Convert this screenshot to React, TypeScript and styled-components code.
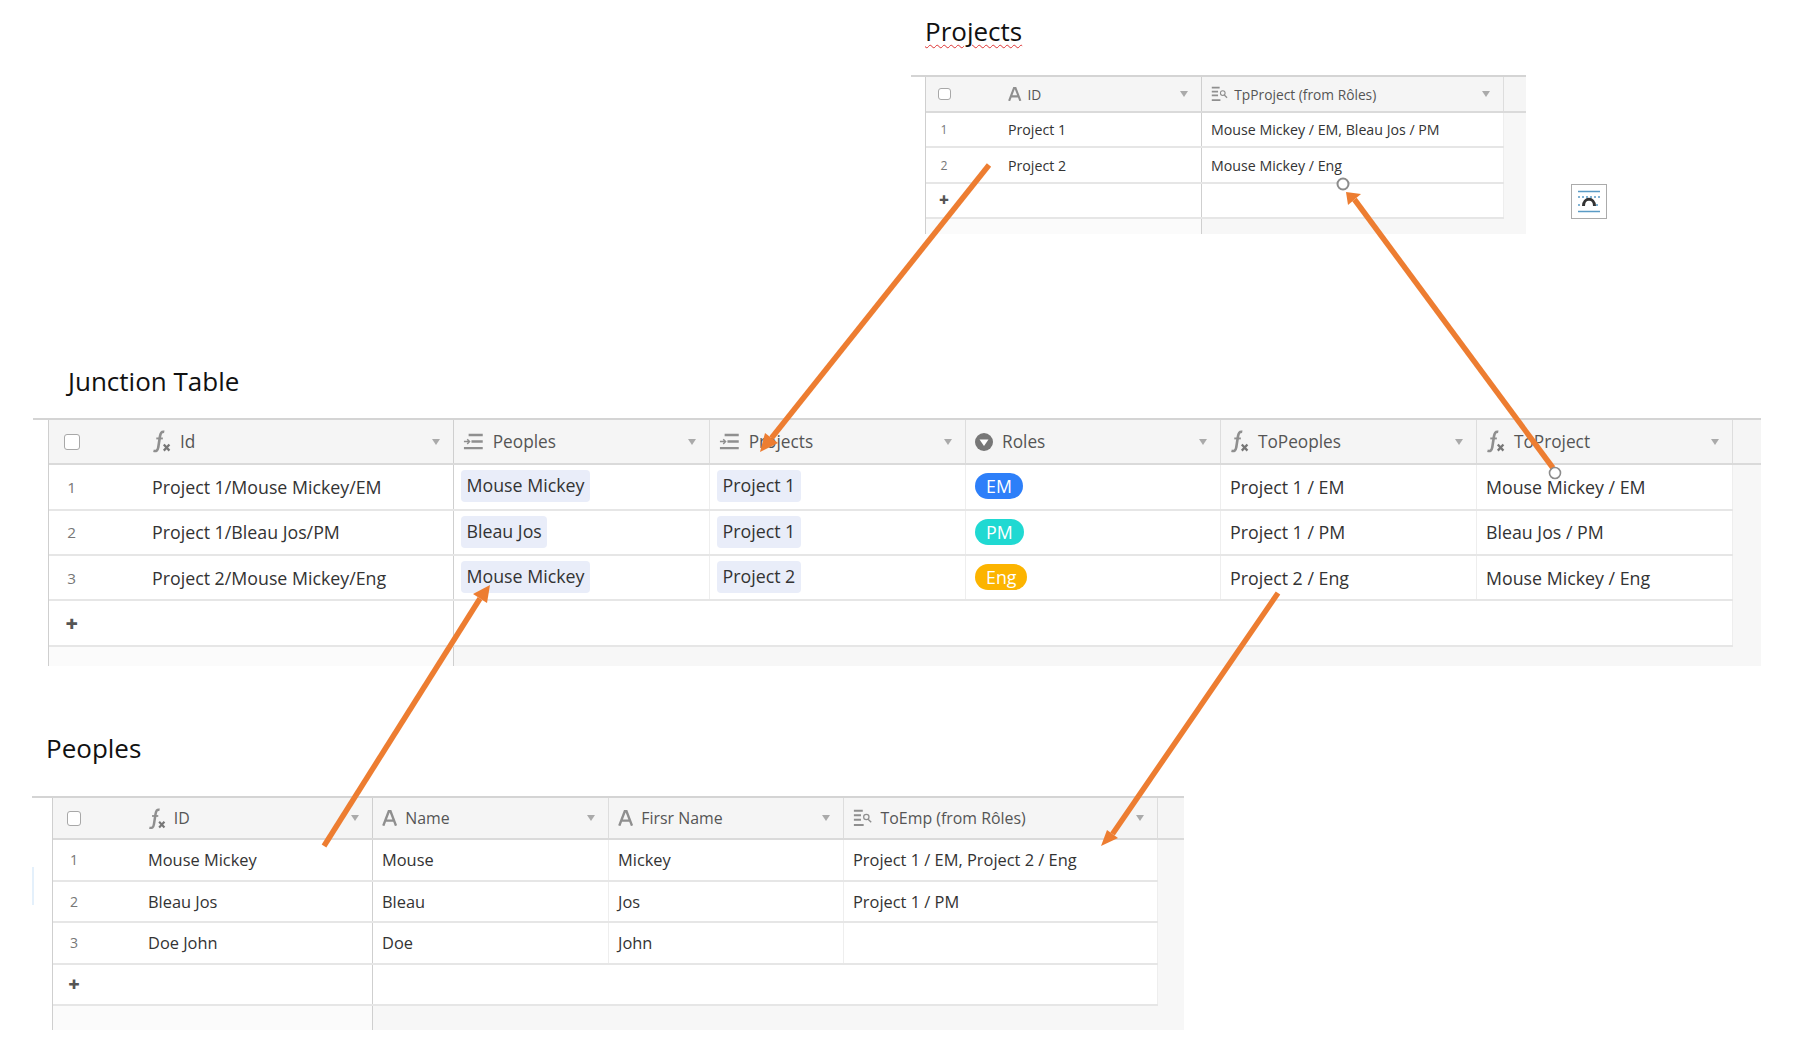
import React from "react";
import styled, { createGlobalStyle } from "styled-components";

const Global = createGlobalStyle`
  html, body {
    margin: 0;
    padding: 0;
    background: #fff;
  }
  body {
    font-family: "Open Sans", "Liberation Sans", sans-serif;
    color: #333;
  }
`;

const Page = styled.div`
  position: relative;
  width: 1805px;
  height: 1045px;
  overflow: hidden;
  background: #fff;
`;

const Section = styled.section<{ $left: number; $top: number }>`
  margin-left: ${p => p.$left}px;
  padding-top: ${p => p.$top}px;
`;

const Title = styled.h2<{ $indent: number; $gap: number }>`
  margin: 0 0 ${p => p.$gap}px ${p => p.$indent}px;
  height: 30px;
  font-family: "Open Sans", sans-serif;
  font-size: 26px;
  line-height: 30px;
  font-weight: 400;
  color: #111;
`;

const Misspelt = styled.span`
  text-decoration: underline wavy #d33 1px;
  text-underline-offset: 3px;
`;

const TableRow = styled.div`
  display: flex;
  align-items: flex-start;
`;

const Frame = styled.div<{ $width: number; $gutter: number; $font: number }>`
  width: ${p => p.$width}px;
  padding-left: ${p => p.$gutter}px;
  box-sizing: border-box;
  border-top: 2px solid #d4d4d4;
  font-size: ${p => p.$font}px;
  color: #333;
`;

const Inner = styled.div`
  display: flex;
  flex-direction: column;
  background: #f7f7f7;
  border-left: 1px solid #cfcfcf;
`;

const HeaderRow = styled.div<{ $height: number }>`
  display: flex;
  height: ${p => p.$height}px;
  box-sizing: border-box;
  border-bottom: 2px solid #dadada;
  background: #f5f5f5;
  color: #555;
`;

const HeaderCell = styled.div<{ $width: number; $first?: boolean; $gap: number }>`
  display: flex;
  align-items: center;
  width: ${p => p.$width}px;
  flex: none;
  box-sizing: border-box;
  padding: 0 13px 0 9px;
  gap: ${p => p.$gap}px;
  border-right: 1px solid ${p => (p.$first ? "#cfcfcf" : "#dddddd")};
`;

const NumberSlot = styled.div<{ $width: number; $gap: number }>`
  display: flex;
  align-items: center;
  justify-content: center;
  flex: none;
  width: ${p => p.$width}px;
  margin: 0 ${p => -p.$gap}px 0 -9px;
  padding-right: ${p => p.$width * 0.56}px;
  box-sizing: border-box;
  font-size: 0.86em;
`;

const Checkbox = styled.span`
  display: block;
  flex: none;
  width: 0.9em;
  height: 0.9em;
  border: 1px solid #a8a8a8;
  border-radius: 3px;
  background: #fff;
`;

const Label = styled.span`
  flex: 1;
  white-space: nowrap;
  font-size: 0.97em;
`;

const Caret = styled.span`
  width: 0;
  height: 0;
  flex: none;
  border-left: 4px solid transparent;
  border-right: 4px solid transparent;
  border-top: 6px solid #aaa;
`;

const Row = styled.div<{ $height: number; $width: number }>`
  display: flex;
  width: ${p => p.$width}px;
  height: ${p => p.$height}px;
  box-sizing: border-box;
  border-bottom: 2px solid #e6e6e6;
`;

const Cell = styled.div<{ $width: number; $first?: boolean }>`
  display: flex;
  align-items: center;
  width: ${p => p.$width}px;
  flex: none;
  box-sizing: border-box;
  padding-left: 9px;
  background: #fff;
  white-space: nowrap;
  border-right: 1px solid ${p => (p.$first ? "#cfcfcf" : "#eeeeee")};
`;

const RowNumber = styled.span<{ $width: number }>`
  flex: none;
  width: ${p => p.$width}px;
  padding-right: ${p => p.$width * 0.56}px;
  box-sizing: border-box;
  margin-left: -9px;
  text-align: center;
  color: #777;
  font-size: 0.86em;
`;

const Plus = styled(RowNumber)`
  margin-top: -2px;
  color: #555;
  font-weight: 800;
  font-size: 1.2em;
`;

const Chip = styled.span`
  display: inline-block;
  margin: -1px 0 0 -2px;
  padding: 0 5.5px;
  height: 32px;
  line-height: 31px;
  border-radius: 4px;
  background: #e9edf9;
`;

const RolePill = styled.span<{ $color: string }>`
  display: inline-block;
  height: 26px;
  margin-top: -1px;
  padding: 0 11px;
  line-height: 26px;
  border-radius: 13px;
  color: #fff;
  background: ${p => p.$color};
`;

const Footer = styled.div<{ $height: number }>`
  display: flex;
  height: ${p => p.$height}px;
`;

const FooterFirst = styled.div<{ $width: number }>`
  width: ${p => p.$width}px;
  flex: none;
  box-sizing: border-box;
  background: #fbfbfb;
  border-right: 1px solid #cfcfcf;
`;

const IconSlot = styled.svg`
  display: block;
  flex: none;
  fill: none;
  stroke: #8f8f8f;
`;

const ToolButton = styled.div`
  flex: none;
  width: 36px;
  height: 35px;
  margin: 109px 0 0 45px;
  box-sizing: border-box;
  border: 1px solid #ababab;
  display: flex;
  align-items: center;
  justify-content: center;
`;

const Arrows = styled.svg`
  position: absolute;
  left: 0;
  top: 0;
  pointer-events: none;
`;

const SelectionMark = styled.div`
  position: absolute;
  left: 32px;
  top: 867px;
  width: 2px;
  height: 38px;
  background: #e4f0fb;
`;

type IconKind = "fx" | "text" | "link" | "lookup" | "select";

const Icon = ({ kind, size }: { kind: IconKind; size: number }) => {
  if (kind === "fx") {
    return (
      <IconSlot width={size * 1.05} height={size * 1.25} viewBox="0 0 20 24" strokeWidth="2.8">
        <path d="M13 2C10 1.4 9 3.4 8.4 7L6.6 18.5C6 22 4.4 23 1.5 22.2" />
        <path d="M4.5 9H11.5" strokeWidth="2" />
        <path d="M12.5 15.5L18.5 22M18.5 15.5L12.5 22" strokeWidth="2.4" stroke="#777" />
      </IconSlot>
    );
  }
  if (kind === "text") {
    return (
      <IconSlot width={size * 0.9} height={size * 0.95} viewBox="0 0 18 19" strokeWidth="2.8">
        <path d="M1.5 18.5L8 1.5H10L16.5 18.5M4.5 12.5H13.5" />
      </IconSlot>
    );
  }
  if (kind === "link") {
    return (
      <IconSlot width={size * 1.15} height={size * 0.95} viewBox="0 0 22 18" strokeWidth="2.6">
        <path d="M6 2H21M9 9H21M1 16H21" />
        <path d="M1 9H7M4.5 6.5L7 9L4.5 11.5" strokeWidth="1.5" />
      </IconSlot>
    );
  }
  if (kind === "lookup") {
    return (
      <IconSlot width={size * 1.15} height={size * 1.05} viewBox="0 0 22 20" strokeWidth="2.2">
        <path d="M1 2H11M1 7H9M1 12H9M1 18H12" />
        <circle cx="15" cy="9" r="3" strokeWidth="1.4" />
        <path d="M17 11.5L20.5 15" strokeWidth="1.6" />
      </IconSlot>
    );
  }
  return (
    <IconSlot width={size} height={size} viewBox="0 0 18 18">
      <circle cx="9" cy="9" r="9" fill="#777" stroke="none" />
      <path d="M4.5 6.5H13.5L9 13Z" fill="#fff" stroke="none" />
    </IconSlot>
  );
};

type Column = { icon: IconKind; label: string; width: number };

type TableConfig = {
  width: number;
  gutter: number;
  font: number;
  iconSize: number;
  iconGap: number;
  slot: number;
  headerHeight: number;
  rowHeight: number;
  footerHeight: number;
  columns: Column[];
  rows: React.ReactNode[][];
};

const DataTable = ({ config }: { config: TableConfig }) => {
  const { columns, slot, rows, iconGap } = config;
  const rest = columns.slice(1).reduce((sum, c) => sum + c.width, 0);
  const total = columns[0].width + rest;
  return (
    <Frame $width={config.width} $gutter={config.gutter} $font={config.font}>
      <Inner>
        <HeaderRow $height={config.headerHeight}>
          {columns.map((col, i) => (
            <HeaderCell key={col.label} $width={col.width} $first={i === 0} $gap={iconGap}>
              {i === 0 && (
                <NumberSlot $width={slot} $gap={iconGap}>
                  <Checkbox />
                </NumberSlot>
              )}
              <Icon kind={col.icon} size={config.iconSize} />
              <Label>{col.label}</Label>
              <Caret />
            </HeaderCell>
          ))}
        </HeaderRow>
        {rows.map((row, r) => (
          <Row key={r} $height={config.rowHeight} $width={total}>
            {row.map((value, c) => (
              <Cell key={c} $width={columns[c].width} $first={c === 0}>
                {c === 0 && <RowNumber $width={slot}>{r + 1}</RowNumber>}
                {value}
              </Cell>
            ))}
          </Row>
        ))}
        <Row $height={config.rowHeight} $width={total}>
          <Cell $width={columns[0].width} $first>
            <Plus $width={slot}>+</Plus>
          </Cell>
          <Cell $width={rest} />
        </Row>
        <Footer $height={config.footerHeight}>
          <FooterFirst $width={columns[0].width} />
        </Footer>
      </Inner>
    </Frame>
  );
};

const projects: TableConfig = {
  width: 615,
  gutter: 14,
  font: 14.2,
  iconSize: 15,
  iconGap: 6,
  slot: 82,
  headerHeight: 36,
  rowHeight: 35.4,
  footerHeight: 15,
  columns: [
    { icon: "text", label: "ID", width: 276 },
    { icon: "lookup", label: "TpProject (from Rôles)", width: 302 },
  ],
  rows: [
    ["Project 1", "Mouse Mickey / EM, Bleau Jos / PM"],
    ["Project 2", "Mouse Mickey / Eng"],
  ],
};

const junction: TableConfig = {
  width: 1728,
  gutter: 15,
  font: 17.8,
  iconSize: 18,
  iconGap: 9,
  slot: 103,
  headerHeight: 45,
  rowHeight: 45.4,
  footerHeight: 19.5,
  columns: [
    { icon: "fx", label: "Id", width: 405 },
    { icon: "link", label: "Peoples", width: 256 },
    { icon: "link", label: "Projects", width: 256 },
    { icon: "select", label: "Roles", width: 255 },
    { icon: "fx", label: "ToPeoples", width: 256 },
    { icon: "fx", label: "ToProject", width: 256 },
  ],
  rows: [
    [
      "Project 1/Mouse Mickey/EM",
      <Chip>Mouse Mickey</Chip>,
      <Chip>Project 1</Chip>,
      <RolePill $color="#2d7ff9">EM</RolePill>,
      "Project 1 / EM",
      "Mouse Mickey / EM",
    ],
    [
      "Project 1/Bleau Jos/PM",
      <Chip>Bleau Jos</Chip>,
      <Chip>Project 1</Chip>,
      <RolePill $color="#20d9d2">PM</RolePill>,
      "Project 1 / PM",
      "Bleau Jos / PM",
    ],
    [
      "Project 2/Mouse Mickey/Eng",
      <Chip>Mouse Mickey</Chip>,
      <Chip>Project 2</Chip>,
      <RolePill $color="#fcb400">Eng</RolePill>,
      "Project 2 / Eng",
      "Mouse Mickey / Eng",
    ],
  ],
};

const peoples: TableConfig = {
  width: 1152,
  gutter: 20,
  font: 16.4,
  iconSize: 17,
  iconGap: 8,
  slot: 95,
  headerHeight: 42,
  rowHeight: 41.5,
  footerHeight: 24,
  columns: [
    { icon: "fx", label: "ID", width: 320 },
    { icon: "text", label: "Name", width: 236 },
    { icon: "text", label: "Firsr Name", width: 235 },
    { icon: "lookup", label: "ToEmp (from Rôles)", width: 314 },
  ],
  rows: [
    ["Mouse Mickey", "Mouse", "Mickey", "Project 1 / EM, Project 2 / Eng"],
    ["Bleau Jos", "Bleau", "Jos", "Project 1 / PM"],
    ["Doe John", "Doe", "John", ""],
  ],
};

const ORANGE = "#ed7d31";

const Arrow = ({ from, to, wings }: { from: number[]; to: number[]; wings: number[][] }) => (
  <g>
    <line x1={from[0]} y1={from[1]} x2={(wings[0][0] + wings[1][0]) / 2} y2={(wings[0][1] + wings[1][1]) / 2} stroke={ORANGE} strokeWidth="5.5" />
    <polygon points={`${to[0]},${to[1]} ${wings[0][0]},${wings[0][1]} ${wings[1][0]},${wings[1][1]}`} fill={ORANGE} />
  </g>
);

export default function App() {
  return (
    <Page>
      <Global />
      <Section $left={911} $top={16}>
        <Title $indent={14} $gap={29}>
          <Misspelt>Projects</Misspelt>
        </Title>
        <TableRow>
          <DataTable config={projects} />
          <ToolButton>
            <svg width="24" height="23" viewBox="0 0 24 23" fill="none">
              <path d="M1 1.5H23M1 21.5H23" stroke="#5a9bc5" strokeWidth="1.6" />
              <path d="M1 7H23M1 15H5M19 15H23" stroke="#5a9bc5" strokeWidth="1.4" strokeDasharray="2 2" />
              <path d="M6.5 16C6.5 7 17.5 7 17.5 16" stroke="#333" strokeWidth="3" />
            </svg>
          </ToolButton>
        </TableRow>
      </Section>
      <Section $left={33} $top={132}>
        <Title $indent={35} $gap={22}>
          Junction Table
        </Title>
        <DataTable config={junction} />
      </Section>
      <Section $left={32} $top={67}>
        <Title $indent={14} $gap={33}>
          Peoples
        </Title>
        <DataTable config={peoples} />
      </Section>
      <SelectionMark />
      <Arrows width="1805" height="1045" viewBox="0 0 1805 1045">
        <Arrow from={[989, 165]} to={[760, 452]} wings={[[765, 433], [778, 443]]} />
        <Arrow from={[1553, 468]} to={[1346, 192]} wings={[[1361, 194], [1348, 205]]} />
        <Arrow from={[324, 846]} to={[490, 585]} wings={[[473, 594], [487, 603]]} />
        <Arrow from={[1278, 593]} to={[1101, 846]} wings={[[1107, 830], [1118, 838]]} />
        <circle cx="1343" cy="184" r="5.5" fill="#fff" stroke="#8c8c8c" strokeWidth="2" />
        <circle cx="1555" cy="473" r="5.5" fill="none" stroke="#8c8c8c" strokeWidth="1.6" />
      </Arrows>
    </Page>
  );
}
